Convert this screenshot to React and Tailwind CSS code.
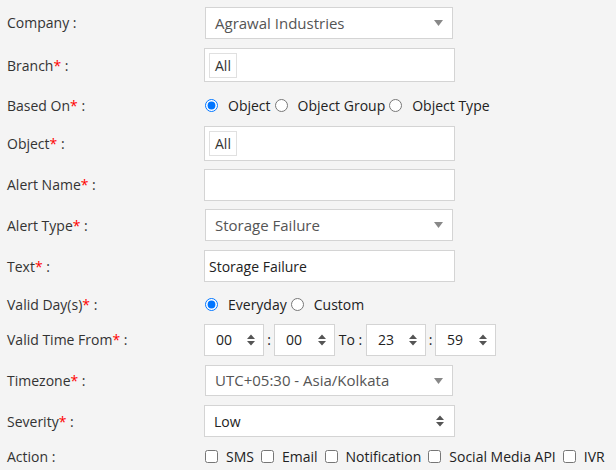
import React from 'react'

const Req = () => <span className="text-[#ff0000]">*</span>

function Label({ text, req }) {
  return (
    <div className="w-[204px] shrink-0 pl-[7px] text-[#333]">
      {text}
      {req && <Req />} :
    </div>
  )
}

function Caret() {
  return (
    <svg width="9" height="6" viewBox="0 0 9 6" className="absolute right-[9px] top-1/2 -translate-y-1/2">
      <path d="M0 0 H9 L4.5 6 Z" fill="#888" />
    </svg>
  )
}

function Spin({ right = 'right-[8px]' }) {
  return (
    <svg width="8" height="12" viewBox="0 0 8 12" className={`absolute ${right} top-1/2 -translate-y-1/2`}>
      <path d="M0 5 L4 0.5 L8 5 Z M0 7 L4 11.5 L8 7 Z" fill="#555" />
    </svg>
  )
}

function Select2({ value }) {
  return (
    <div className="relative ml-px w-[248px] h-full bg-white border border-[#d4d4d4] flex items-center pl-[9px] text-[15px] text-[#555]">
      {value}
      <Caret />
    </div>
  )
}

function Tags() {
  return (
    <div className="w-[251px] h-full bg-white border border-[#d4d4d4] flex items-center pl-[4px]">
      <span className="h-[25px] px-[5px] flex items-center border border-[#e0e0e0] text-[#333]">All</span>
    </div>
  )
}

function TextBox({ value }) {
  return (
    <div className="w-[251px] h-full bg-white border border-[#d4d4d4] flex items-center pl-[4px] text-[#222]">
      {value}
    </div>
  )
}

function Radio({ checked, label }) {
  return (
    <label className="flex items-center">
      <input type="radio" checked={checked} readOnly className="w-[13px] h-[13px] m-0 mr-[10px] accent-[#0075ff]" />
      {label}
    </label>
  )
}

function Check({ label }) {
  return (
    <label className="flex items-center">
      <input type="checkbox" readOnly className="w-[13px] h-[13px] m-0 mr-[8px]" />
      {label}
    </label>
  )
}

function TimeBox({ value, w = 'w-[60px]' }) {
  return (
    <div className={`relative ${w} h-full bg-white border border-[#d4d4d4] flex items-center pl-[11px] text-[#222]`}>
      {value}
      <Spin />
    </div>
  )
}

export default function App() {
  return (
    <div
      className="w-[616px] h-[470px] bg-[#f4f4f4] text-[14px] text-[#222] overflow-hidden flex flex-col"
      style={{ fontFamily: '"Open Sans", "Liberation Sans", sans-serif' }}
    >
      <div className="mt-[7px] h-[32px] flex items-center">
        <Label text="Company" />
        <Select2 value="Agrawal Industries" />
      </div>
      <div className="mt-[9px] h-[35px] flex items-center">
        <Label text="Branch" req />
        <Tags />
      </div>
      <div className="mt-[6px] h-[34px] flex items-center">
        <Label text="Based On" req />
        <div className="flex items-center gap-[4px] pl-px">
          <Radio checked label="Object" />
          <Radio label="Object Group" />
          <Radio label="Object Type" />
        </div>
      </div>
      <div className="mt-[4px] h-[35px] flex items-center">
        <Label text="Object" req />
        <Tags />
      </div>
      <div className="mt-[8px] h-[32px] flex items-center">
        <Label text="Alert Name" req />
        <TextBox value="" />
      </div>
      <div className="mt-[8px] h-[33px] flex items-center">
        <Label text="Alert Type" req />
        <Select2 value="Storage Failure" />
      </div>
      <div className="mt-[9px] h-[32px] flex items-center">
        <Label text="Text" req />
        <TextBox value="Storage Failure" />
      </div>
      <div className="mt-[7px] h-[30px] flex items-center">
        <Label text="Valid Day(s)" req />
        <div className="flex items-center gap-[4px] pl-px">
          <Radio checked label="Everyday" />
          <Radio label="Custom" />
        </div>
      </div>
      <div className="mt-[5px] h-[32px] flex items-center">
        <Label text="Valid Time From" req />
        <TimeBox value="00" />
        <span className="w-[10px] text-center">:</span>
        <TimeBox value="00" w="w-[61px]" />
        <span className="w-[31px] text-center">To :</span>
        <TimeBox value="23" />
        <span className="w-[9px] text-center">:</span>
        <TimeBox value="59" w="w-[61px]" />
      </div>
      <div className="mt-[9px] h-[32px] flex items-center">
        <Label text="Timezone" req />
        <Select2 value="UTC+05:30 - Asia/Kolkata" />
      </div>
      <div className="mt-[9px] h-[32px] flex items-center">
        <Label text="Severity" req />
        <div className="relative w-[251px] h-full bg-white border border-[#d4d4d4] flex items-center pl-[9px] text-[#222]">
          Low
          <Spin right="right-[10px]" />
        </div>
      </div>
      <div className="mt-[5px] h-[28px] flex items-center">
        <Label text="Action" />
        <div className="flex items-center gap-[7px] pl-px">
          <Check label="SMS" />
          <Check label="Email" />
          <Check label="Notification" />
          <Check label="Social Media API" />
          <Check label="IVR" />
        </div>
      </div>
    </div>
  )
}
